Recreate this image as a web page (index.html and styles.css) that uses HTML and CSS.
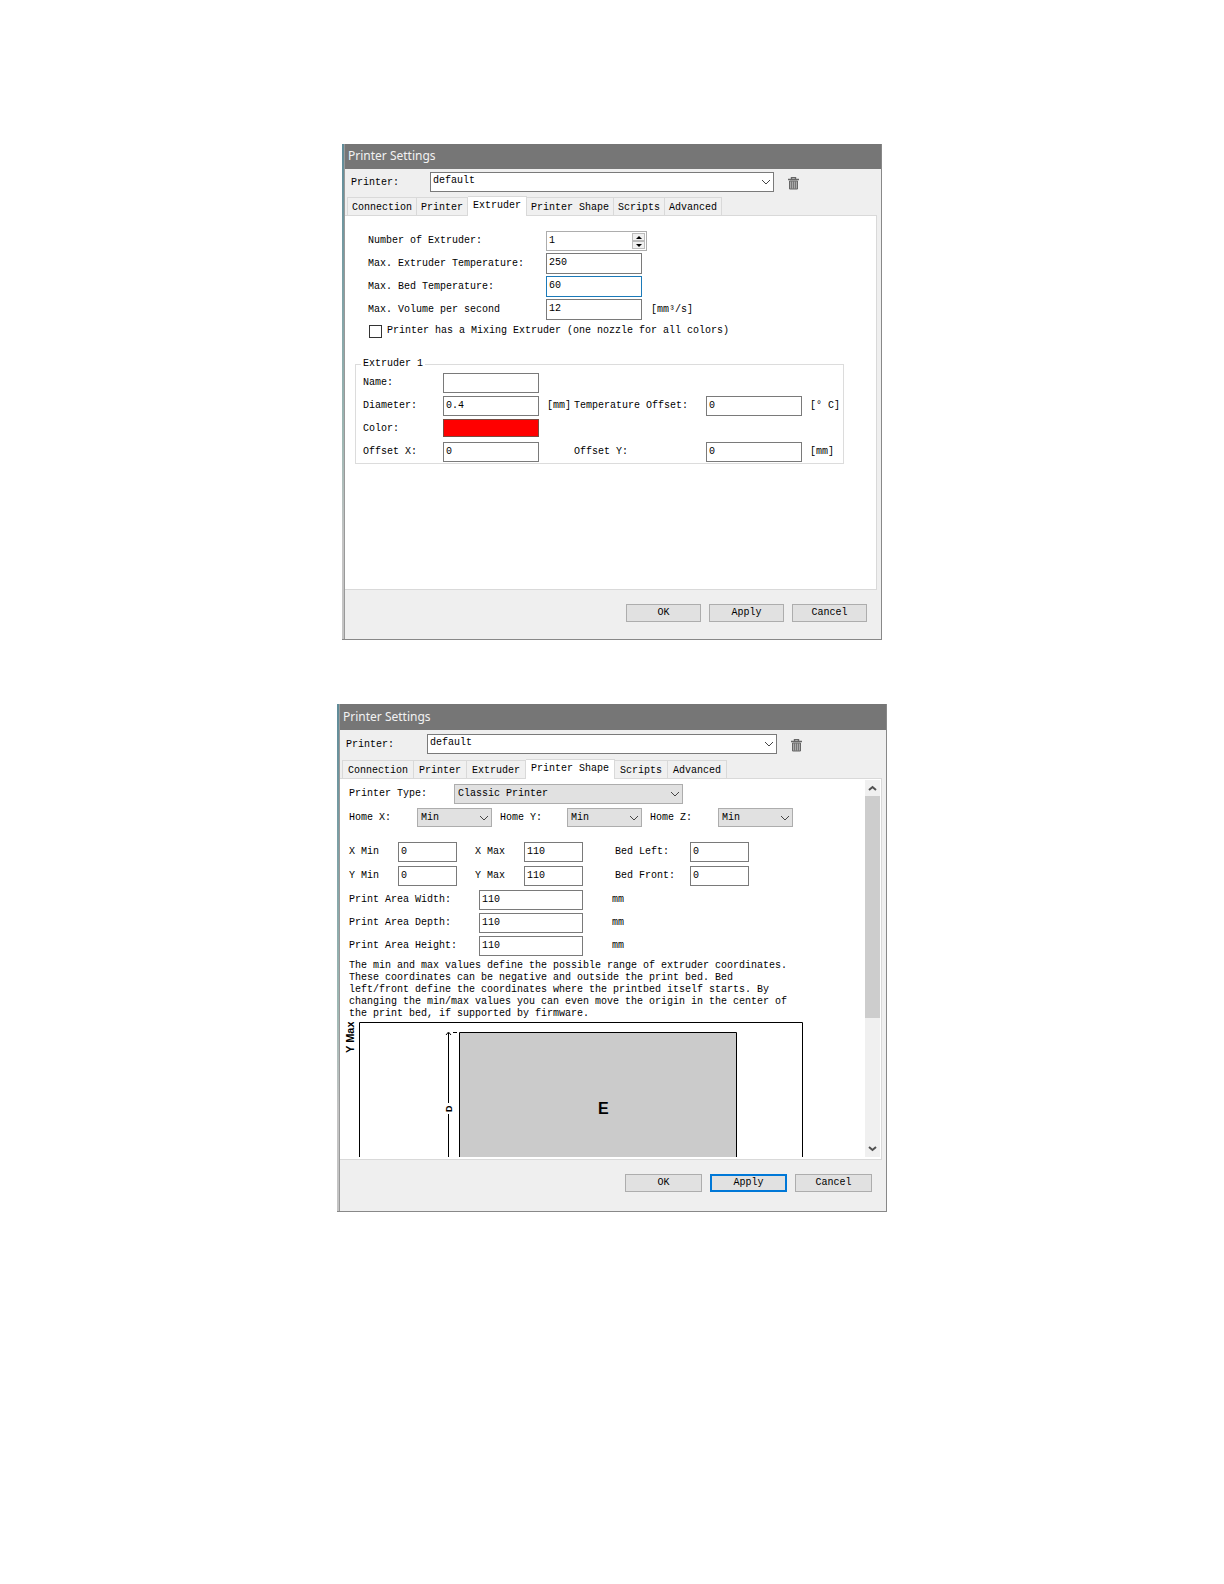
FILE: index.html
```html
<!DOCTYPE html>
<html lang="en">
<head>
  <meta charset="UTF-8" />
  <title>Printer Settings</title>
  <link rel="stylesheet" href="styles.css">
</head>
<body>

  <svg class="defs" width="0" height="0" aria-hidden="true">
    <symbol id="chevron" viewBox="0 0 10 6"><path d="M1 1l4 4 4-4" fill="none" stroke="currentColor" /></symbol>
    <symbol id="trash" viewBox="0 0 11 13">
      <path d="M0 2.500h11M3.500 2V.500h4V2" fill="none" stroke="#666" stroke-width="1.400" />
      <path d="M1.500 4h8v8h-8z" fill="#aaa" stroke="#666" />
      <path d="M3.500 4v8M5.500 4v8M7.500 4v8" stroke="#777" />
    </symbol>
  </svg>

  <form class="dialog">
    <h1 class="titlebar">Printer Settings</h1>
    <div class="printer-row">
      <label for="printer1">Printer:</label>
      <span class="select white">
        <select id="printer1"><option>default</option></select>
        <svg><use href="#chevron" /></svg>
      </span>
      <button type="button" class="trash" aria-label="Delete printer"><svg width="11" height="13"><use href="#trash" /></svg></button>
    </div>
    <div class="tabs" role="tablist">
      <button type="button" role="tab">Connection</button>
      <button type="button" role="tab">Printer</button>
      <button type="button" role="tab" class="active" aria-selected="true">Extruder</button>
      <button type="button" role="tab">Printer Shape</button>
      <button type="button" role="tab">Scripts</button>
      <button type="button" role="tab">Advanced</button>
    </div>
    <div class="panel extruder-panel">
      <div class="limits">
        <label for="count">Number of Extruder:</label>
        <span class="spinner">
          <input id="count" type="text" value="1">
          <span class="steps">
            <button type="button" aria-label="More"><svg width="6" height="3"><path d="M3 0l3 3H0z" /></svg></button>
            <button type="button" aria-label="Less"><svg width="6" height="3"><path d="M0 0h6L3 3z" /></svg></button>
          </span>
        </span>
        <span></span>
        <label for="maxExt">Max. Extruder Temperature:</label>
        <input id="maxExt" type="text" value="250">
        <span></span>
        <label for="maxBed">Max. Bed Temperature:</label>
        <input id="maxBed" type="text" class="focused" value="60">
        <span></span>
        <label for="maxVol">Max. Volume per second</label>
        <input id="maxVol" type="text" value="12">
        <span>[mm³/s]</span>
      </div>
      <label class="check"><input type="checkbox">Printer has a Mixing Extruder (one nozzle for all colors)</label>

      <fieldset>
        <legend>Extruder 1</legend>
        <div class="extruder">
          <label for="name">Name:</label>
          <input id="name" type="text" value="">
          <label for="diameter" class="first">Diameter:</label>
          <input id="diameter" type="text" value="0.4">
          <span class="unit">[mm]</span>
          <label for="tempOffset">Temperature Offset:</label>
          <input id="tempOffset" type="text" value="0">
          <span class="unit">[° C]</span>
          <label for="color" class="first">Color:</label>
          <input id="color" type="color" value="#ff0000">
          <label for="offX" class="first">Offset X:</label>
          <input id="offX" type="text" value="0">
          <span></span>
          <label for="offY">Offset Y:</label>
          <input id="offY" type="text" value="0">
          <span class="unit">[mm]</span>
        </div>
      </fieldset>
    </div>
    <div class="footer">
      <button type="button">OK</button>
      <button type="button">Apply</button>
      <button type="button">Cancel</button>
    </div>
  </form>

  <form class="dialog shape">
    <h1 class="titlebar">Printer Settings</h1>
    <div class="printer-row">
      <label for="printer2">Printer:</label>
      <span class="select white">
        <select id="printer2"><option>default</option></select>
        <svg><use href="#chevron" /></svg>
      </span>
      <button type="button" class="trash" aria-label="Delete printer"><svg width="11" height="13"><use href="#trash" /></svg></button>
    </div>
    <div class="tabs" role="tablist">
      <button type="button" role="tab">Connection</button>
      <button type="button" role="tab">Printer</button>
      <button type="button" role="tab">Extruder</button>
      <button type="button" role="tab" class="active" aria-selected="true">Printer Shape</button>
      <button type="button" role="tab">Scripts</button>
      <button type="button" role="tab">Advanced</button>
    </div>
    <div class="panel shape-panel">
      <div class="scroll-content">
        <div class="type-row">
          <label for="type">Printer Type:</label>
          <span class="select">
            <select id="type"><option>Classic Printer</option></select>
            <svg><use href="#chevron" /></svg>
          </span>
        </div>
        <div class="home-row">
          <label for="homeX">Home X:</label>
          <span class="select"><select id="homeX"><option>Min</option></select><svg><use href="#chevron" /></svg></span>
          <label for="homeY">Home Y:</label>
          <span class="select"><select id="homeY"><option>Min</option></select><svg><use href="#chevron" /></svg></span>
          <label for="homeZ">Home Z:</label>
          <span class="select"><select id="homeZ"><option>Min</option></select><svg><use href="#chevron" /></svg></span>
        </div>
        <div class="bounds">
          <label for="xMin">X Min</label>
          <input id="xMin" type="text" value="0">
          <label for="xMax">X Max</label>
          <input id="xMax" type="text" value="110">
          <label for="bedLeft">Bed Left:</label>
          <input id="bedLeft" type="text" value="0">
          <label for="yMin">Y Min</label>
          <input id="yMin" type="text" value="0">
          <label for="yMax">Y Max</label>
          <input id="yMax" type="text" value="110">
          <label for="bedFront">Bed Front:</label>
          <input id="bedFront" type="text" value="0">
        </div>
        <div class="area">
          <label for="areaW">Print Area Width:</label>
          <input id="areaW" type="text" value="110">
          <span class="unit">mm</span>
          <label for="areaD">Print Area Depth:</label>
          <input id="areaD" type="text" value="110">
          <span class="unit">mm</span>
          <label for="areaH">Print Area Height:</label>
          <input id="areaH" type="text" value="110">
          <span class="unit">mm</span>
        </div>
        <p class="help">
          The min and max values define the possible range of extruder coordinates.<br>
          These coordinates can be negative and outside the print bed. Bed<br>
          left/front define the coordinates where the printbed itself starts. By<br>
          changing the min/max values you can even move the origin in the center of<br>
          the print bed, if supported by firmware.
        </p>
        <!-- bed drawing, cut off by the scroll area -->
        <svg class="bed" width="462" height="135" viewBox="0 0 462 135">
          <path d="M17.500 140V.500h443V140" fill="none" stroke="#000" />
          <path d="M117.500 140V10.500h277V140" fill="#cbcbcb" stroke="#000" />
          <path d="M106.500 11v70M106.500 92v48M104 13l2.500-3 2.500 3M111 10.500h4" fill="none" stroke="#000" />
          <text class="axis" transform="translate(12 31) rotate(-90)">Y Max</text>
          <text class="axis small" transform="translate(110 90) rotate(-90)">D</text>
          <text class="mark" x="256" y="92">E</text>
        </svg>
      </div>
      <div class="scrollbar">
        <svg width="9" height="7"><path d="M1 5l3.500-3L8 5" /></svg>
        <div class="thumb"></div>
        <svg width="9" height="7"><path d="M1 2l3.500 3L8 2" /></svg>
      </div>
    </div>
    <div class="footer">
      <button type="button">OK</button>
      <button type="button" class="default">Apply</button>
      <button type="button">Cancel</button>
    </div>
  </form>

</body>
</html>
```
FILE: styles.css
```css
* {
  box-sizing: border-box;
}

body {
  margin: 0;
  padding: 144px 16px;
  background: #fff;
  color: #000;
  font: 10px/12px "Liberation Mono", monospace;
  display: flex;
  flex-direction: column;
  align-items: center;
  gap: 64px;
}

input, select, button {
  font: inherit;
  color: inherit;
  border-radius: 0;
  margin: 0;
}

label, .unit {
  white-space: nowrap;
}

.defs {
  position: absolute;
}

/* window frame */
.dialog {
  --tab-pad: 4px;
  width: 100%;
  max-width: 540px;
  padding-left: 3px;
  border-right: 1px solid #888;
  border-bottom: 1px solid #888;
  background: linear-gradient(90deg, transparent 2px, #999 2px 3px, #efefef 3px),
    linear-gradient(#5f8b98, #9fb8b4 60%, #c4c4c4 80%);
}
.dialog.shape {
  --tab-pad: 5px;
  max-width: 550px;
}

.titlebar {
  margin: 0;
  height: 25px;
  padding-left: 3px;
  background: #767676;
  color: #f2f2f2;
  font: 12px/24px "Noto Sans", sans-serif;
}

.printer-row {
  display: flex;
  align-items: center;
  height: 25px;
  padding: 0 82px 0 6px;
}
.printer-row label {
  width: 79px;
  padding-top: 2px;
}
.printer-row .select {
  flex: 1;
}
.shape .titlebar {
  height: 26px;
  line-height: 26px;
}
.shape .printer-row {
  height: 27px;
  padding-right: 84px;
}
.shape .printer-row label {
  width: 81px;
}

/* form controls */
input[type="text"] {
  width: 100%;
  height: 21px;
  padding: 0 2px 2px;
  border: 1px solid #7a7a7a;
  background: #fff;
  outline: none;
}
input[type="text"].focused {
  border-color: #1c7ab8;
}

.select {
  position: relative;
  display: block;
}
.select select {
  display: block;
  width: 100%;
  height: 20px;
  padding: 0 3px;
  appearance: none;
  background: #e1e1e1;
  border: 1px solid #adadad;
}
.select.white select {
  background: #fff;
  border-color: #7a7a7a;
  padding: 0 2px 2px;
}
.select svg {
  position: absolute;
  right: 3px;
  top: 7px;
  width: 10px;
  height: 6px;
  color: #444;
  pointer-events: none;
}

.trash {
  display: flex;
  margin-left: 14px;
  padding: 4px 0 0;
  width: 11px;
  border: none;
  background: none;
}

/* tabs */
.tabs {
  display: flex;
  align-items: flex-end;
  height: 21px;
  padding-left: 2px;
}
.tabs button {
  height: 18px;
  padding: 2px var(--tab-pad) 0;
  border: 1px solid #d9d9d9;
  border-width: 1px 1px 0 0;
  background: #f0f0f0;
  white-space: nowrap;
}
.tabs button:first-child {
  border-left-width: 1px;
}
.tabs .active {
  position: relative;
  height: 20px;
  margin-bottom: -1px;
  padding: 0 5px 1px;
  background: #fff;
}

.panel {
  margin: 0 4px 0 0;
  background: #fff;
  border: 1px solid #d9d9d9;
  border-left: none;
}

/* extruder tab */
.extruder-panel {
  padding: 15px 32px 0 10px;
  min-height: 375px;
}
.limits {
  display: grid;
  grid-template-columns: 178px 101px auto;
  justify-content: start;
  align-items: center;
  gap: 2px 0;
  margin-left: 13px;
}
.limits > input {
  width: 96px;
}
.limits > span:last-child {
  margin-left: 4px;
}
.spinner {
  display: flex;
  height: 20px;
  border: 1px solid #adadad;
}
.spinner input[type="text"] {
  flex: 1;
  min-width: 0;
  height: 18px;
  border: none;
}
.steps {
  display: flex;
  flex-direction: column;
  width: 14px;
  padding: 1px 1px 1px 0;
}
.steps button {
  flex: 1;
  display: flex;
  align-items: center;
  justify-content: center;
  padding: 0;
  border: 1px solid #bbb;
  background: #f0f0f0;
}

.check {
  display: flex;
  align-items: center;
  gap: 5px;
  height: 16px;
  margin: 3px 0 19px 14px;
}
.check input {
  appearance: none;
  width: 13px;
  height: 13px;
  border: 1px solid #333;
  background: #fff;
}

fieldset {
  margin: 0;
  padding: 3px 0 1px 7px;
  border: 1px solid #dcdcdc;
}
legend {
  margin-left: -2px;
  padding: 0 2px;
}
.extruder {
  display: grid;
  grid-template-columns: 80px 96px 35px 132px 96px auto;
  justify-content: start;
  align-items: center;
  gap: 3px 0;
}
.extruder input[type="text"] {
  height: 20px;
}
.extruder .first {
  grid-column: 1;
}
.extruder .unit {
  padding-left: 8px;
}
.extruder input[type="color"] {
  appearance: none;
  width: 100%;
  height: 18px;
  margin-bottom: 2px;
  padding: 0;
  border: 1px solid #7a4a40;
  background: #f00;
}
input::-webkit-color-swatch-wrapper {
  padding: 0;
}
input::-webkit-color-swatch {
  border: none;
}

/* printer shape tab */
.shape-panel {
  display: flex;
  justify-content: space-between;
  padding: 1px 1px 2px 0;
}
.scroll-content {
  padding: 4px 0 0 9px;
  overflow: hidden;
}
.scroll-content input[type="text"] {
  height: 20px;
}
.type-row {
  display: grid;
  grid-template-columns: 105px 229px;
  align-items: center;
}
.home-row {
  display: grid;
  grid-template-columns: 68px 75px 75px 75px 76px 75px;
  align-items: center;
  margin: 4px 0 15px;
}
.home-row .select + label {
  padding-left: 8px;
}
.home-row select {
  height: 19px;
}
.bounds {
  display: grid;
  grid-template-columns: 49px 59px 67px 59px 107px 59px;
  align-items: center;
  row-gap: 4px;
}
.bounds label:nth-of-type(3n + 2) {
  padding-left: 18px;
}
.bounds label:nth-of-type(3n) {
  padding-left: 32px;
}
.area {
  display: grid;
  grid-template-columns: 130px 104px auto;
  align-items: center;
  row-gap: 3px;
  margin: 4px 0;
}
.area .unit {
  padding-left: 29px;
}
.help {
  margin: 0 0 2px;
  white-space: nowrap;
}
.bed {
  display: block;
  margin-left: -7px;
}
.bed text {
  font-family: "Liberation Sans", sans-serif;
  font-weight: bold;
}
.axis {
  font-size: 11px;
}
.axis.small {
  font-size: 9px;
}
.mark {
  font-size: 16px;
}

.scrollbar {
  display: flex;
  flex-direction: column;
  align-items: center;
  width: 15px;
  padding: 5px 0;
  background: #f0f0f0;
}
.scrollbar svg {
  flex: none;
}
.scrollbar path {
  fill: none;
  stroke: #505050;
  stroke-width: 2;
}
.thumb {
  width: 15px;
  height: 222px;
  margin: 4px 0 auto;
  background: #cdcdcd;
}

.footer {
  display: flex;
  justify-content: flex-end;
  gap: 8px;
  padding: 14px 14px 17px;
}
.footer button {
  width: 75px;
  height: 18px;
  padding: 0;
  background: #e1e1e1;
  border: 1px solid #adadad;
}
.shape .footer {
  padding-bottom: 19px;
}
.shape .footer button {
  width: 77px;
}
.footer button.default {
  border: 2px solid #0078d7;
}
```
